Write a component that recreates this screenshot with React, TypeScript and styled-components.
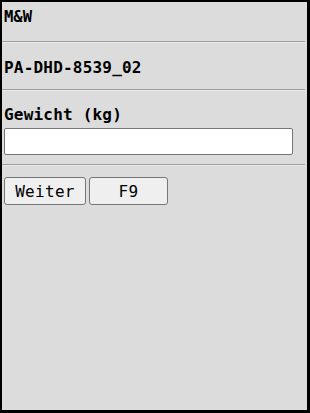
import React from 'react';
import styled, { createGlobalStyle } from 'styled-components';

const GlobalStyle = createGlobalStyle`
  html, body {
    margin: 0;
    padding: 0;
    background: #dcdcdc;
  }
`;

const Frame = styled.div`
  box-sizing: border-box;
  width: 310px;
  height: 413px;
  border: 2px solid #000;
  border-right-width: 3px;
  border-bottom-width: 3px;
  background: #dcdcdc;
  font-family: "DejaVu Sans Mono", "Liberation Mono", monospace;
  color: #000;
`;

const Header = styled.div`
  box-sizing: border-box;
  height: 39px;
  padding: 6px 2px 0;
  font-size: 15.5px;
  line-height: 19px;
  font-weight: bold;
`;

const Divider = styled.div`
  height: 1px;
  margin-right: 2px;
  background: #a0a0a0;
  border-bottom: 1px solid #e8e8e8;
`;

const Section = styled.div<{ $top: number; $bottom?: number }>`
  padding: ${(p) => p.$top}px 2px ${(p) => p.$bottom ?? 0}px;
`;

const Title = styled.div`
  font-size: 16px;
  line-height: 19px;
  font-weight: bold;
  letter-spacing: 0.2px;
`;

const Label = styled.label`
  display: block;
  font-size: 16px;
  line-height: 19px;
  font-weight: bold;
  letter-spacing: 0.2px;
  margin-bottom: 4px;
`;

const Input = styled.input`
  box-sizing: border-box;
  display: block;
  width: 289px;
  height: 27px;
  margin: 0;
  border: 1px solid #767676;
  border-radius: 2px;
  background: #fff;
  font-family: inherit;
  font-size: 16px;
  padding: 0 4px;
  outline: none;
`;

const ButtonRow = styled.div`
  display: flex;
  gap: 3px;
  padding: 11px 2px 0;
`;

const Button = styled.button<{ $w: number }>`
  box-sizing: border-box;
  width: ${(p) => p.$w}px;
  height: 28px;
  margin: 0;
  padding: 0;
  border: 1px solid #767676;
  border-radius: 3px;
  background: #efefef;
  font-family: "DejaVu Sans Mono", "Liberation Mono", monospace;
  font-size: 16px;
  letter-spacing: 0.3px;
  color: #000;
`;

const App: React.FC = () => {
  return (
    <>
      <GlobalStyle />
      <Frame>
        <Header>M&amp;W</Header>
        <Divider />
        <Section $top={15} $bottom={12}>
          <Title>PA-DHD-8539_02</Title>
        </Section>
        <Divider />
        <Section $top={14} $bottom={9}>
          <Label htmlFor="gewicht">Gewicht (kg)</Label>
          <Input id="gewicht" type="text" />
        </Section>
        <Divider />
        <ButtonRow>
          <Button $w={82}>Weiter</Button>
          <Button $w={79}>F9</Button>
        </ButtonRow>
      </Frame>
    </>
  );
};

export default App;
